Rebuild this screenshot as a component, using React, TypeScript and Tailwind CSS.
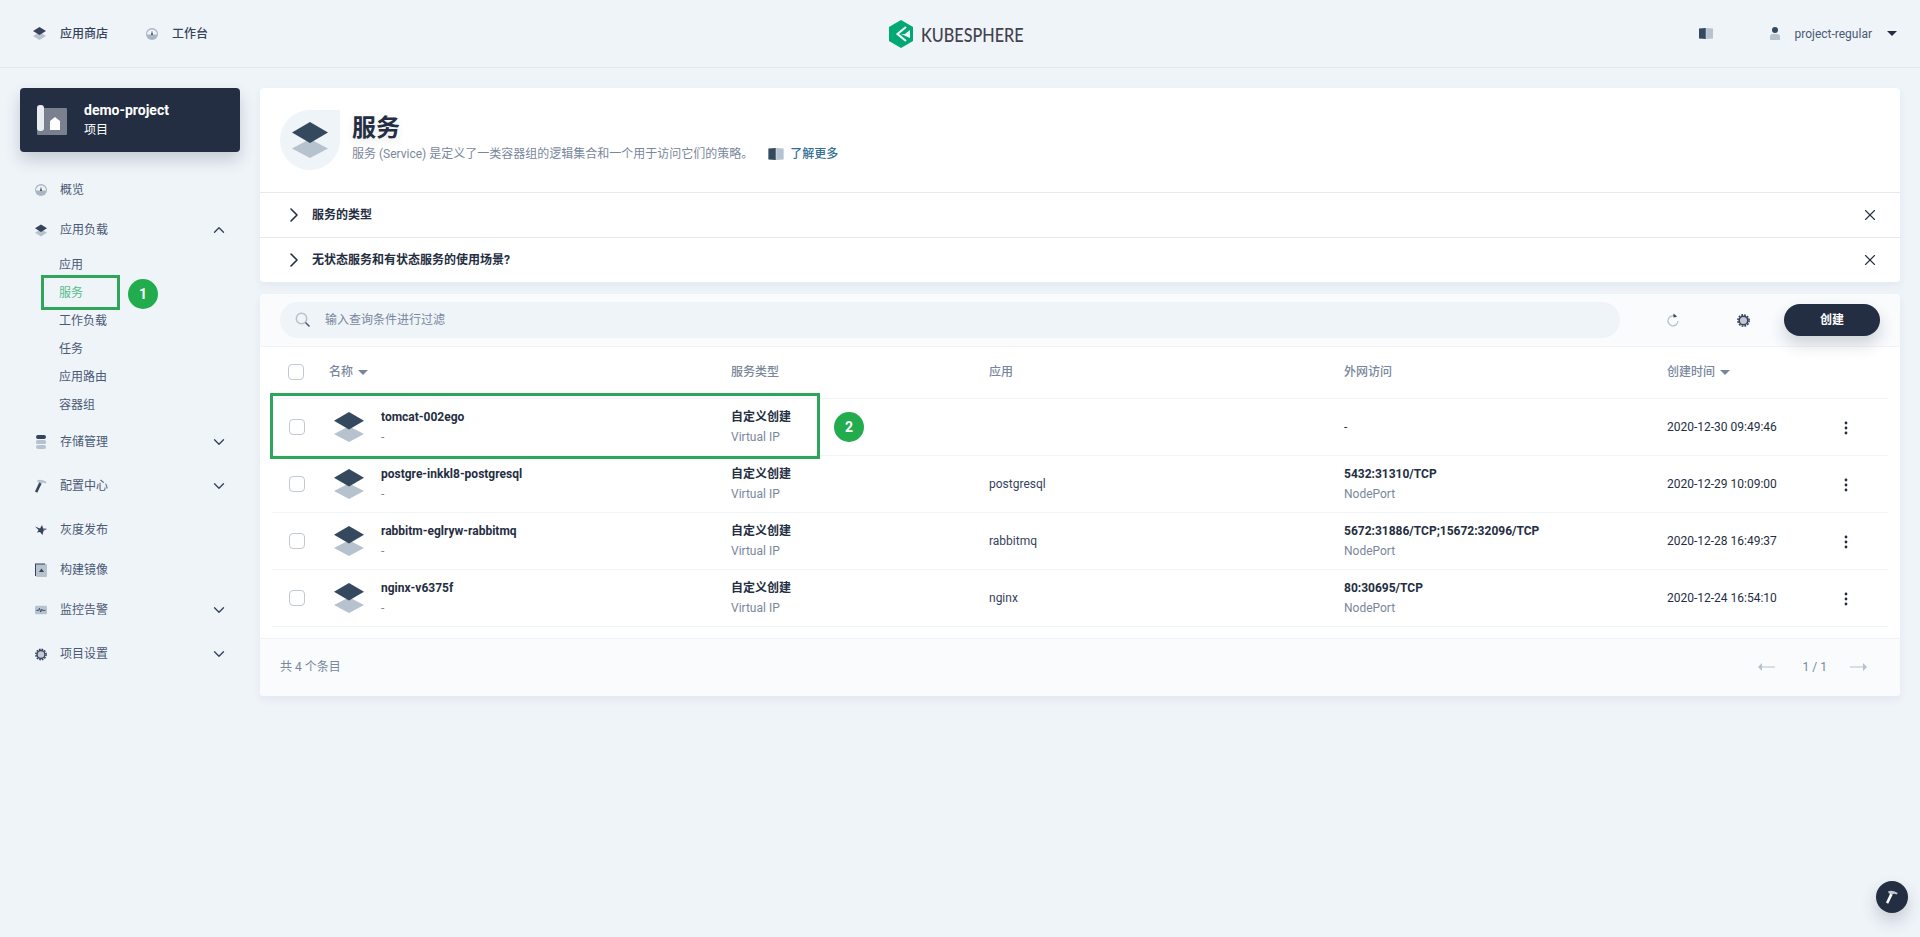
import React from "react";
import { ChevronDown, ChevronRight, ChevronUp, X } from "lucide-react";

const DARK = "#36435c";
const LIGHT = "#b6c2cd";

function Layers({ className }: { className: string }) {
  return (
    <svg viewBox="0 0 36 36" className={className}>
      <polygon points="18,17 36,26.5 18,36 0,26.5" fill={LIGHT} />
      <polygon points="18,0 36,10.5 18,21 0,10.5" fill="#34495e" />
    </svg>
  );
}

function Dial() {
  return (
    <svg viewBox="0 0 12 12" className="w-3 h-3">
      <circle cx="6" cy="6" r="6" fill="#a9b5c1" />
      <path d="M1 6.5a5 5 0 0 1 10 0z" fill="#eff4f9" />
      <path d="M5 7 6 2.4 7 7z" fill={DARK} />
    </svg>
  );
}

function Stack() {
  return (
    <svg viewBox="0 0 13 13" className="w-[13px] h-[13px]">
      <polygon points="6.5,5 13,9 6.5,13 0,9" fill={LIGHT} />
      <polygon points="6.5,0 13,4 6.5,8 0,4" fill={DARK} />
    </svg>
  );
}

function Database() {
  return (
    <svg viewBox="0 0 12 14" className="w-3 h-[14px]">
      <rect x="1" y="0" width="10" height="4" rx="2" fill={DARK} />
      <rect x="1" y="5" width="10" height="4" rx="1.5" fill={LIGHT} />
      <rect x="1" y="10" width="10" height="4" rx="2" fill={LIGHT} />
    </svg>
  );
}

function HammerIcon({ light }: { light?: boolean }) {
  return (
    <svg viewBox="0 0 12 14" className="w-3 h-[14px]">
      <path d="M2 1.5Q5.5-0.8 11.8 3L10.6 4.6Q8 3.2 6.4 4.4L3 3.4z" fill={light ? "#c1c9d1" : LIGHT} />
      <path d="M4.2 3.6 6.6 4.8 2.2 13.8 0 12.6z" fill={light ? "#ffffff" : DARK} />
    </svg>
  );
}

function Bird() {
  return (
    <svg viewBox="0 0 12 12" className="w-3 h-3">
      <path d="M0 2.5 5 4.5 7 1 8 4 12 5 8.5 6.8 7.5 11 5 8 2 8.5 3.6 6z" fill={DARK} />
      <path d="M7 1 8 4 12 5 8.5 5.6z" fill={LIGHT} />
    </svg>
  );
}

function ImageBox() {
  return (
    <svg viewBox="0 0 12 14" className="w-3 h-[14px]">
      <rect x="1" y="1" width="11" height="13" rx="1" fill={LIGHT} />
      <path d="M0 0.5h10v1H1V13H0z" fill={DARK} />
      <polygon points="6.5,5.5 9,9 4,9" fill={DARK} />
    </svg>
  );
}

function Pulse() {
  return (
    <svg viewBox="0 0 14 10" className="w-[14px] h-[10px]">
      <rect width="14" height="10" rx="1.5" fill={LIGHT} />
      <path d="M1.5 5.5h2.5L5.2 3l1.4 4.4 1.3-3.4.8 1.5h3.5" fill="none" stroke={DARK} strokeWidth="1" />
    </svg>
  );
}

function Gear() {
  return (
    <svg viewBox="0 0 14 14" className="w-[13px] h-[13px]">
      <circle cx="7" cy="7" r="4.6" fill="#c1c9d1" stroke={DARK} strokeWidth="1.6" />
      <circle cx="7" cy="7" r="6" fill="none" stroke={DARK} strokeWidth="1.8" strokeDasharray="1.9 1.24" />
    </svg>
  );
}

function Book({ className }: { className: string }) {
  return (
    <svg viewBox="0 0 14 11" className={className}>
      <path d="M0 0.5 6.8 0v11L0 10.5z" fill="#34495e" />
      <path d="M7.2 0 14 0.5v10l-6.8.5z" fill={LIGHT} />
    </svg>
  );
}

function Arrow({ right }: { right?: boolean }) {
  return (
    <svg viewBox="0 0 17 10" className={right ? "w-[17px] h-[10px]" : "w-[17px] h-[10px] -scale-x-100"}>
      <rect x="0" y="4.5" width="13" height="1" fill={LIGHT} />
      <polygon points="13,1 17,5 13,9" fill={LIGHT} />
    </svg>
  );
}

function Caret() {
  return <span className="ml-[5px] w-0 h-0 border-x-[5px] border-x-transparent border-t-[5px] border-t-[#79879c] mt-[1px]" />;
}

const sideItems = [
  { label: "存储管理", icon: <Database />, arrow: true, cls: "mb-3" },
  { label: "配置中心", icon: <HammerIcon />, arrow: true, cls: "mb-3" },
  { label: "灰度发布", icon: <Bird />, arrow: false, cls: "mb-2" },
  { label: "构建镜像", icon: <ImageBox />, arrow: false, cls: "mb-2" },
  { label: "监控告警", icon: <Pulse />, arrow: true, cls: "mb-3" },
  { label: "项目设置", icon: <Gear />, arrow: true, cls: "" },
];

const subItems = ["应用", "服务", "工作负载", "任务", "应用路由", "容器组"];

const rows = [
  { name: "tomcat-002ego", app: "", port: "-", portType: "", time: "2020-12-30 09:49:46" },
  { name: "postgre-inkkl8-postgresql", app: "postgresql", port: "5432:31310/TCP", portType: "NodePort", time: "2020-12-29 10:09:00" },
  { name: "rabbitm-eglryw-rabbitmq", app: "rabbitmq", port: "5672:31886/TCP;15672:32096/TCP", portType: "NodePort", time: "2020-12-28 16:49:37" },
  { name: "nginx-v6375f", app: "nginx", port: "80:30695/TCP", portType: "NodePort", time: "2020-12-24 16:54:10" },
];

function SideRow({ icon, label, arrow, className }: { icon: React.ReactNode; label: string; arrow?: React.ReactNode; className?: string }) {
  return (
    <div className={"flex items-center h-8 " + (className ?? "")}>
      <span className="w-[12px] h-4 flex items-center justify-center ml-[15px]">{icon}</span>
      <span className="ml-[13px] text-xs text-[#4a5974]">{label}</span>
      {arrow && <span className="ml-auto mr-[12px] flex">{arrow}</span>}
    </div>
  );
}

function Tip({ label }: { label: string }) {
  return (
    <div className="flex items-center h-[44px] pl-[22px] pr-[21px]">
      <ChevronRight className="w-6 h-6 text-[#242e42]" strokeWidth={1.6} />
      <span className="ml-[6px] text-xs font-bold text-[#242e42]">{label}</span>
      <X className="ml-auto w-[18px] h-[18px] text-[#242e42]" strokeWidth={1.5} />
    </div>
  );
}

export default function App() {
  return (
    <div className="relative min-h-[937px] bg-[#eff4f9] font-[Roboto,'Noto_Sans_CJK_SC',sans-serif] text-[#242e42] overflow-hidden">
      <header className="relative flex items-center h-[68px] pl-[33px] pr-[23px] border-b border-[#e3e9ef]">
        <Stack />
        <span className="ml-[14px] text-xs font-medium text-[#36435c]">应用商店</span>
        <span className="ml-[38px]"><Dial /></span>
        <span className="ml-[14px] text-xs font-medium text-[#36435c]">工作台</span>
        <div className="absolute left-[889px] top-[20px] flex items-center gap-2">
          <svg viewBox="0 0 24 28" className="w-6 h-7">
            <polygon points="12,0 24,7 24,21 12,28 0,21 0,7" fill="#00a971" />
            <path d="M17 7 8.5 14l8.5 7" fill="none" stroke="#eff4f9" strokeWidth="2.2" />
            <path d="M12 14h4l5-4v8z" fill="#eff4f9" />
          </svg>
          <span className="font-[Lato,sans-serif] text-[20px] leading-7 font-medium text-[#45414f] origin-left scale-x-[0.81]">KUBESPHERE</span>
        </div>
        <div className="ml-auto flex items-center">
          <Book className="w-[14px] h-[11px]" />
          <svg viewBox="0 0 10 13" className="ml-[57px] w-[10px] h-[13px]">
            <circle cx="5" cy="3" r="3" fill="#34495e" />
            <path d="M0 13V9.5Q0 7 3 7h4q3 0 3 2.5V13z" fill={LIGHT} />
          </svg>
          <span className="ml-[15px] text-xs text-[#4a5974]">project-regular</span>
          <span className="ml-[15px] w-0 h-0 border-x-[5px] border-x-transparent border-t-[5px] border-t-[#242e42]" />
        </div>
      </header>

      <div className="flex">
        <aside className="w-[260px] shrink-0 pt-5 pl-5 pr-5">
          <div className="flex items-center h-16 rounded bg-[#242e42] shadow-[0_8px_16px_0_rgba(36,46,66,0.2)] pl-[17px]">
            <svg viewBox="0 0 30 30" className="w-[30px] h-[30px]">
              <rect x="0" y="3" width="30" height="27" fill="#7a808d" rx="1" />
              <rect x="0" y="0" width="7" height="26" rx="3" fill="#e9edf1" />
              <path d="M13 16l5-4 5 4v9H13z" fill="#ffffff" />
            </svg>
            <div className="ml-[17px]">
              <div className="text-sm leading-5 font-bold text-white">demo-project</div>
              <div className="text-xs leading-5 text-white">项目</div>
            </div>
          </div>

          <div className="mt-[22px]">
            <SideRow className="mb-2" icon={<Dial />} label="概览" />
            <SideRow icon={<Stack />} label="应用负载" arrow={<ChevronUp className="w-[18px] h-[18px] text-[#36435c]" strokeWidth={1.8} />} />
            <div className="pl-[39px] mb-[7px] mt-[5px]">
              {subItems.map((s) => (
                <div key={s} className={"h-[28px] leading-[28px] text-xs " + (s === "服务" ? "text-[#55bc8a]" : "text-[#4a5974]")}>{s}</div>
              ))}
            </div>
            {sideItems.map((item) => (
              <SideRow
                key={item.label}
                className={item.cls}
                icon={item.icon}
                label={item.label}
                arrow={item.arrow ? <ChevronDown className="w-[18px] h-[18px] text-[#36435c]" strokeWidth={1.8} /> : undefined}
              />
            ))}
          </div>
        </aside>

        <main className="flex-1 pt-5 pr-5">
          <section className="rounded bg-white shadow-[0_4px_8px_0_rgba(36,46,66,0.06)]">
            <div className="flex h-[105px] pt-[22px] pl-5 border-b border-[#e3e9ef]">
              <div className="relative w-[60px] h-[60px] rounded-[50%_0_50%_50%] bg-[#eff4f9] flex items-center justify-center">
                <Layers className="w-9 h-9" />
              </div>
              <div className="ml-3">
                <h1 className="text-2xl leading-8 pt-[2px] font-bold text-[#242e42] [text-shadow:0_4px_8px_rgba(36,46,66,0.1)]">服务</h1>
                <div className="flex items-center text-xs leading-5 text-[#79879c]">
                  <span>服务 (Service) 是定义了一类容器组的逻辑集合和一个用于访问它们的策略。</span>
                  <Book className="ml-[15px] w-[16px] h-[12px]" />
                  <span className="ml-[6px] font-medium text-[#326e93]">了解更多</span>
                </div>
              </div>
            </div>
            <Tip label="服务的类型" />
            <div className="border-t border-[#e3e9ef]">
              <Tip label="无状态服务和有状态服务的使用场景?" />
            </div>
          </section>

          <section className="mt-3 rounded bg-white shadow-[0_4px_8px_0_rgba(36,46,66,0.06)] overflow-hidden">
            <div className="flex items-center h-[53px] pl-5 pr-5 bg-[#f9fbfd] border-b border-[#eff4f9]">
              <div className="flex items-center w-[1340px] h-9 rounded-full bg-[#eff4f9] pl-[15px]">
                <svg viewBox="0 0 16 16" className="w-4 h-4">
                  <circle cx="6.5" cy="6.5" r="5.2" fill="none" stroke={LIGHT} strokeWidth="1.5" />
                  <path d="M10.5 10.5l4 4" stroke="#4a5974" strokeWidth="1.6" />
                </svg>
                <span className="ml-[14px] text-xs text-[#79879c]">输入查询条件进行过滤</span>
              </div>
              <svg viewBox="0 0 12 14" className="ml-[47px] w-3 h-[14px]">
                <path d="M9.5 4.2A5 5 0 1 0 11 8" fill="none" stroke={LIGHT} strokeWidth="1.3" />
                <polygon points="6.5,0.5 10,3.5 6.5,4.5" fill={DARK} />
              </svg>
              <span className="ml-[58px]"><Gear /></span>
              <button className="ml-[34px] w-24 h-8 rounded-full bg-[#242e42] text-white text-xs font-bold shadow-[0_8px_16px_0_rgba(36,46,66,0.2)]">创建</button>
            </div>

            <div className="px-3">
              <div className="grid grid-cols-[459px_258px_355px_323px_1fr] items-center h-[52px] pb-[2px] border-b border-[#eff4f9] text-xs font-medium text-[#79879c]">
                <div className="flex items-center pl-4">
                  <span className="w-4 h-4 rounded-sm border border-[#c1c9d1] bg-white" />
                  <span className="ml-[25px]">名称</span>
                  <Caret />
                </div>
                <div>服务类型</div>
                <div>应用</div>
                <div>外网访问</div>
                <div className="flex items-center">创建时间<Caret /></div>
              </div>
              {rows.map((r) => (
                <div key={r.name} className="grid grid-cols-[459px_258px_355px_323px_1fr] items-center h-[57px] border-b border-[#eff4f9] text-xs leading-5">
                  <div className="flex items-center pl-[17px]">
                    <span className="w-4 h-4 rounded-sm border border-[#c1c9d1] bg-white" />
                    <Layers className="ml-[29px] w-[30px] h-[30px]" />
                    <div className="ml-[17px]">
                      <div className="font-bold">{r.name}</div>
                      <div className="text-[#79879c]">-</div>
                    </div>
                  </div>
                  <div>
                    <div className="font-bold">自定义创建</div>
                    <div className="text-[#79879c]">Virtual IP</div>
                  </div>
                  <div className="text-[#36435c]">{r.app}</div>
                  <div>
                    <div className={r.portType ? "font-bold" : ""}>{r.port}</div>
                    {r.portType && <div className="text-[#79879c]">{r.portType}</div>}
                  </div>
                  <div className="flex items-center">
                    <span>{r.time}</span>
                    <svg viewBox="0 0 4 14" className="ml-[67px] mt-[2px] w-1 h-[14px]">
                      <circle cx="2" cy="2" r="1.4" fill="#242e42" />
                      <circle cx="2" cy="7" r="1.4" fill="#242e42" />
                      <circle cx="2" cy="12" r="1.4" fill="#242e42" />
                    </svg>
                  </div>
                </div>
              ))}
            </div>

            <div className="flex items-center h-[58px] mt-[11px] pb-[2px] pl-5 pr-[33px] bg-[#f9fbfd] border-t border-[#eff4f9]">
              <span className="text-xs text-[#79879c]">共 4 个条目</span>
              <div className="ml-auto flex items-center">
                <Arrow />
                <span className="ml-[28px] mr-[23px] text-xs text-[#79879c]">1 / 1</span>
                <Arrow right />
              </div>
            </div>
          </section>
        </main>
      </div>

      {/* annotations on top of the page */}
      <div className="absolute left-[41px] top-[275px] w-[79px] h-[35px] border-[3px] border-[#2ea55a]" />
      <div className="absolute left-[128px] top-[279px] w-[30px] h-[30px] rounded-full bg-[#22ac4e] flex items-center justify-center text-white text-sm font-bold">1</div>
      <div className="absolute left-[270px] top-[393px] w-[550px] h-[66px] border-[3px] border-[#2ea55a]" />
      <div className="absolute left-[834px] top-[412px] w-[30px] h-[30px] rounded-full bg-[#22ac4e] flex items-center justify-center text-white text-sm font-bold">2</div>

      <button className="absolute right-3 top-[881px] w-8 h-8 rounded-full bg-[#242e42] flex items-center justify-center shadow-[0_8px_16px_0_rgba(36,46,66,0.2)]">
        <HammerIcon light />
      </button>
    </div>
  );
}
